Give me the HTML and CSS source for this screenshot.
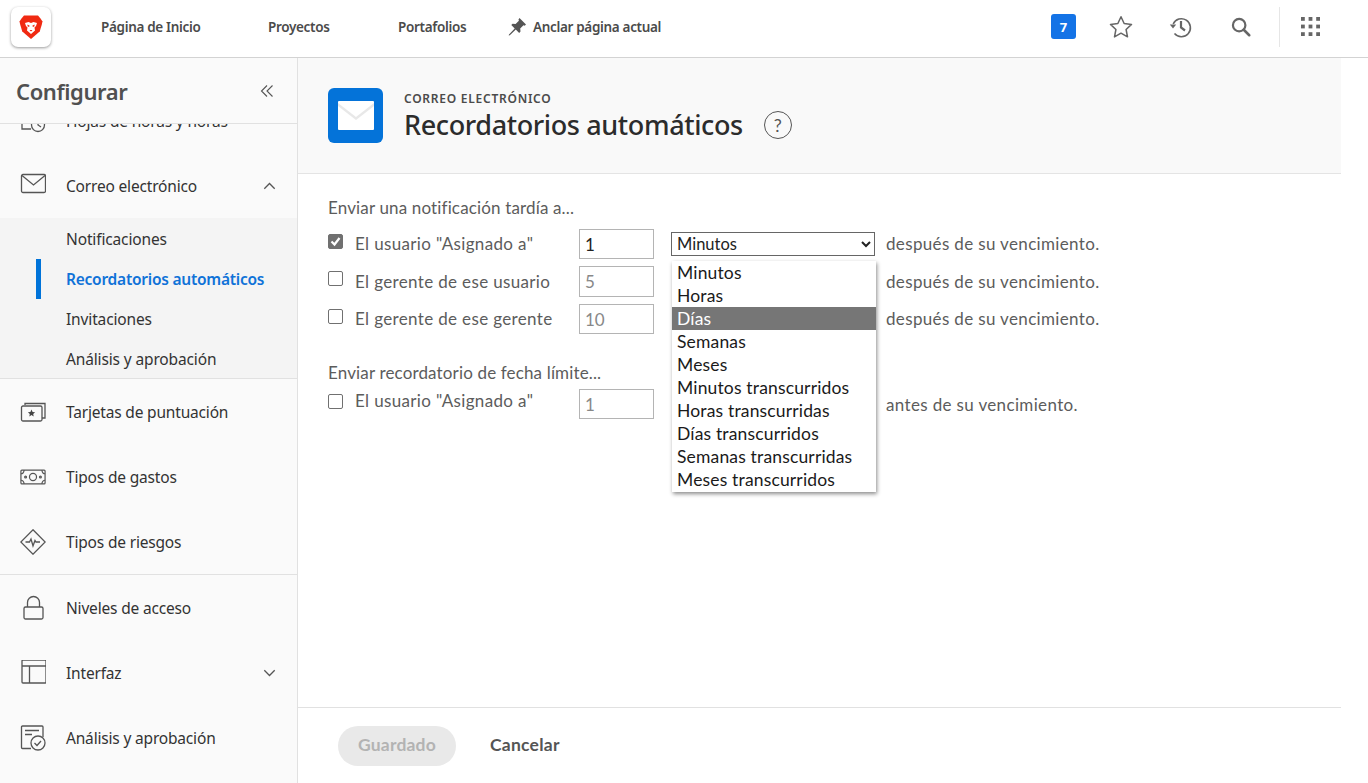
FILE: index.html
```html
<!DOCTYPE html>
<html lang="es">
<head>
<meta charset="utf-8">
<title>Recordatorios automáticos</title>
<link rel="stylesheet" href="styles.css">
</head>
<body>
<header class="topbar">
  <div class="logo-box">
    <svg class="logo" viewBox="0 0 24 26"><path fill="#f02a12" d="M5 1.500h14l2.500 3 2 3-.8 3.500-2 6.500L12 25 3.300 17.500l-2-6.500L.5 7.500l2-3z"/><path fill="#fff" d="M6 9l3.500-1 2.500 1 2.500-1L18 9l-1 3-1.500 1.500.5 3L12 20l-4-3.500.5-3L7 12z"/><path fill="#f02a12" d="M8.500 10.500l2.200 1.200-.7 1.300-1.500-.8zM15.500 10.500l-2.200 1.200.7 1.300 1.500-.8zM10.500 16h3L12 17.500z"/></svg>
  </div>
  <nav class="topnav">
    <a class="topnav-link link-home">Página de Inicio</a>
    <a class="topnav-link link-projects">Proyectos</a>
    <a class="topnav-link link-port">Portafolios</a>
    <a class="topnav-link link-pin">
      <svg class="pin" viewBox="0 0 20 20"><path fill="#555" d="M12.500 1l6.500 6.500-1.300 1.200-1.200-.4-3.300 3.300.3 3-1.300 1.300-3.400-3.400-6 5.700-1.100.3.300-1.100 5.700-6-3.400-3.400 1.300-1.300 3 .3 3.300-3.300-.4-1.200z"/></svg>
      Anclar página actual
    </a>
  </nav>
  <div class="top-tools">
    <span class="badge">7</span>
    <svg class="tool tool-star" viewBox="0 0 24 24"><path fill="none" stroke="#666" stroke-width="1.400" stroke-linejoin="round" d="M12 2.500l2.900 6.300 6.800.8-5 4.700 1.300 6.800-6-3.400-6 3.400 1.300-6.800-5-4.700 6.800-.8z"/></svg>
    <svg class="tool tool-hist" viewBox="0 0 24 24"><path fill="none" stroke="#666" stroke-width="1.600" d="M4.200 9A9 9 0 1 1 5.500 18.500"/><path fill="#666" d="M.8 9.500h6.400L4 13.600z"/><path fill="none" stroke="#666" stroke-width="2.200" d="M12 6v6.500l4 3"/></svg>
    <svg class="tool tool-search" viewBox="0 0 24 24"><circle cx="10" cy="10" r="6.800" fill="none" stroke="#666" stroke-width="2.400"/><path stroke="#666" stroke-width="2.800" stroke-linecap="round" d="M15 15l6 6"/></svg>
    <span class="top-divider"></span>
    <svg class="tool tool-grid" viewBox="0 0 20 20"><g fill="#666"><rect x="0" y="0" width="4" height="4"/><rect x="8" y="0" width="4" height="4"/><rect x="16" y="0" width="4" height="4"/><rect x="0" y="8" width="4" height="4"/><rect x="8" y="8" width="4" height="4"/><rect x="16" y="8" width="4" height="4"/><rect x="0" y="16" width="4" height="4"/><rect x="8" y="16" width="4" height="4"/><rect x="16" y="16" width="4" height="4"/></g></svg>
  </div>
</header>

<div class="body-row">
  <aside class="sidebar">
    <div class="side-head">
      <h2 class="side-title">Configurar</h2>
      <svg class="collapse" viewBox="0 0 14 14"><path fill="none" stroke="#555" stroke-width="1.100" d="M7 1.500L1.500 7 7 12.500M12.500 1.500L7 7l5.500 5.500"/></svg>
    </div>
    <div class="side-scroll">
      <div class="side-list">
        <a class="side-row">
          <svg class="side-icon" viewBox="0 0 26 26"><path class="ln" d="M2 3h17v5M2 3v18h9"/><circle class="ln" cx="18" cy="17" r="6.500"/><path class="ln" d="M18 13v4l3 2"/></svg>
          <span>Hojas de horas y horas</span>
        </a>
        <a class="side-row">
          <svg class="side-icon" viewBox="0 0 26 26"><rect class="ln" x="1.500" y="1.500" width="24" height="18" rx="1.500"/><path class="ln" d="M2 2.500L13.500 12 25 2.500"/></svg>
          <span>Correo electrónico</span>
          <svg class="chev" viewBox="0 0 12 8"><path class="ln" d="M.8 6.800L6 1.500l5.200 5.300"/></svg>
        </a>
        <div class="sub-list">
          <a class="sub-row">Notificaciones</a>
          <a class="sub-row sub-active">Recordatorios automáticos</a>
          <a class="sub-row">Invitaciones</a>
          <a class="sub-row">Análisis y aprobación</a>
        </div>
        <a class="side-row">
          <svg class="side-icon" viewBox="0 0 26 26"><path class="ln" d="M5 6V4.500h20v14.500h-3"/><rect class="ln" x="1.500" y="7" width="20.500" height="15" rx="1.500"/><path fill="#444" d="M11.500 10.500l1.100 2.400 2.500.3-1.900 1.700.5 2.500-2.200-1.300-2.200 1.300.5-2.500-1.900-1.700 2.500-.3z"/></svg>
          <span>Tarjetas de puntuación</span>
        </a>
        <a class="side-row">
          <svg class="side-icon" viewBox="0 0 28 26"><rect class="ln" x="1" y="5.500" width="26" height="15" rx="1"/><circle class="ln" cx="14" cy="13" r="3.800"/><circle class="ln" cx="6" cy="13" r="1"/><circle class="ln" cx="22" cy="13" r="1"/><path class="ln" d="M1 9.500c2 0 3-1 3.500-4M27 9.500c-2 0-3-1-3.500-4M1 16.500c2 0 3 1 3.500 4M27 16.500c-2 0-3 1-3.500 4"/></svg>
          <span>Tipos de gastos</span>
        </a>
        <a class="side-row row-end">
          <svg class="side-icon" viewBox="0 0 26 26"><path class="ln" d="M13 .8L25.200 13 13 25.200.8 13z"/><path class="ln" d="M5.500 13h4l1.500-3 2 7 2-5.500 1 1.500h4"/></svg>
          <span>Tipos de riesgos</span>
        </a>
        <a class="side-row">
          <svg class="side-icon" viewBox="0 0 26 26"><rect class="ln" x="4" y="12" width="19" height="12" rx="1.500"/><path class="ln" d="M7.500 12V7.500a6 6 0 0 1 12 0V12"/></svg>
          <span>Niveles de acceso</span>
        </a>
        <a class="side-row">
          <svg class="side-icon" viewBox="0 0 26 26"><rect class="ln" x="2" y="0" width="24" height="23" rx="1"/><path class="ln" d="M2 6h24M9.500 6v17"/></svg>
          <span>Interfaz</span>
          <svg class="chev" viewBox="0 0 12 8"><path class="ln" d="M.8 1.200L6 6.500l5.200-5.300"/></svg>
        </a>
        <a class="side-row">
          <svg class="side-icon" viewBox="0 0 26 26"><path class="ln" d="M11 23.500H2.500a1 1 0 0 1-1-1V2a1 1 0 0 1 1-1h19.500a1 1 0 0 1 1 1v10"/><path class="ln" d="M5 5.500h14M5 9.500h7"/><circle class="ln" cx="18" cy="18" r="7"/><path class="ln" d="M14.500 18l2.500 2.500 4-4.500"/></svg>
          <span>Análisis y aprobación</span>
        </a>
      </div>
    </div>
  </aside>

  <main class="main">
    <div class="page-head">
      <div class="mail-tile">
        <svg class="mail-svg" viewBox="0 0 36 29"><rect width="36" height="29" rx="1" fill="#fff"/><path fill="#e8e8e8" d="M0 2l18 14L36 2v3L18 19 0 5z"/></svg>
      </div>
      <div class="head-text">
        <div class="eyebrow">CORREO ELECTRÓNICO</div>
        <div class="title-row">
          <h1 class="page-title">Recordatorios automáticos</h1>
          <span class="help">?</span>
        </div>
      </div>
    </div>

    <div class="form-area">
      <p class="group-label">Enviar una notificación tardía a...</p>
      <div class="form-row row-a">
        <span class="check checked"><svg viewBox="0 0 15 15"><path fill="none" stroke="#fff" stroke-width="2.200" d="M3.500 7.500l3 3 5-6.500"/></svg></span>
        <span class="row-label">El usuario "Asignado a"</span>
        <input class="num num-on" value="1">
        <span class="sel-wrap">
          <select class="sel"><option>Minutos</option></select>
          <div class="popup">
            <div class="opt">Minutos</div>
            <div class="opt">Horas</div>
            <div class="opt opt-hl">Días</div>
            <div class="opt">Semanas</div>
            <div class="opt">Meses</div>
            <div class="opt">Minutos transcurridos</div>
            <div class="opt">Horas transcurridas</div>
            <div class="opt">Días transcurridos</div>
            <div class="opt">Semanas transcurridas</div>
            <div class="opt">Meses transcurridos</div>
          </div>
        </span>
        <span class="after">después de su vencimiento.</span>
      </div>
      <div class="form-row row-b">
        <span class="check"></span>
        <span class="row-label">El gerente de ese usuario</span>
        <input class="num" value="5">
        <span class="sel-gap"></span>
        <span class="after">después de su vencimiento.</span>
      </div>
      <div class="form-row row-c">
        <span class="check"></span>
        <span class="row-label">El gerente de ese gerente</span>
        <input class="num" value="10">
        <span class="sel-gap"></span>
        <span class="after">después de su vencimiento.</span>
      </div>
      <p class="group-label group-two">Enviar recordatorio de fecha límite...</p>
      <div class="form-row row-d">
        <span class="check"></span>
        <span class="row-label">El usuario "Asignado a"</span>
        <input class="num" value="1">
        <span class="sel-gap"></span>
        <span class="after">antes de su vencimiento.</span>
      </div>
    </div>

    <div class="page-foot">
      <button class="btn-saved">Guardado</button>
      <button class="btn-cancel">Cancelar</button>
    </div>
  </main>
  <div class="right-strip"></div>
</div>
</body>
</html>
```
FILE: styles.css
```css
* { box-sizing: border-box; }
html, body { margin: 0; height: 783px; overflow: hidden; background: #fff; }
body { font-family: "Lato", "Liberation Sans", sans-serif; color: #4b4b4b; }

.topbar { height: 58px; border-bottom: 1px solid #d3d3d3; display: flex; align-items: center; background: #fff; }
.logo-box { width: 40px; height: 40px; margin: 0 0 4px 11px; border-radius: 7px; background: #fff; box-shadow: 0 1px 3px rgba(0,0,0,.4); display: flex; align-items: center; justify-content: center; }
.logo { width: 24px; height: 26px; }
.topnav { display: flex; align-items: center; margin-left: 50px; height: 100%; padding-bottom: 4px; }
.topnav-link { font-family: "Noto Sans", sans-serif; font-weight: 600; font-size: 13.500px; letter-spacing: -.33px; color: #4b4b4b; white-space: nowrap; display: flex; align-items: center; }
.link-home { width: 167px; }
.link-projects { width: 130px; }
.link-port { width: 111px; }
.pin { width: 20px; height: 20px; margin-right: 6px; margin-left: -2px; }
.top-tools { margin-left: auto; display: flex; align-items: center; height: 100%; padding-right: 48px; }
.badge { width: 25px; height: 25px; border-radius: 3px; background: #1473e6; color: #fff; font-family: "Noto Sans", sans-serif; font-weight: 700; font-size: 13px; display: flex; align-items: center; justify-content: center; margin-right: 32px; margin-bottom: 4px; }
.tool { display: block; margin-bottom: 4px; }
.tool-star { width: 26px; height: 26px; margin-right: 35px; }
.tool-hist { width: 24px; height: 24px; margin-right: 37px; }
.tool-search { width: 22px; height: 22px; margin-right: 27px; }
.top-divider { width: 1px; height: 40px; background: #e6e6e6; margin-right: 21px; margin-bottom: 3px; }
.tool-grid { width: 19px; height: 19px; margin-bottom: 5px; }

.body-row { display: flex; height: 725px; }
.sidebar { width: 298px; flex: none; background: #fafafa; border-right: 1px solid #e1e1e1; display: flex; flex-direction: column; }
.side-head { height: 66px; flex: none; border-bottom: 1px solid #e1e1e1; display: flex; align-items: center; justify-content: space-between; padding: 0 23px 0 16px; }
.side-title { margin: 0; font-family: "Noto Sans", sans-serif; font-weight: 600; font-size: 22px; letter-spacing: -.4px; color: #505050; }
.collapse { width: 14px; height: 14px; }
.side-scroll { flex: 1; overflow: hidden; }
.side-list { margin-top: -36px; }
.side-row { height: 65px; display: flex; align-items: center; padding: 0 21px 0 20px; font-family: "Noto Sans", sans-serif; font-size: 15.500px; letter-spacing: -.18px; color: #333; }
.side-row > span { margin-left: 20px; flex: 1; }
.row-end { height: 66px; border-bottom: 1px solid #e1e1e1; }
.side-icon { width: 26px; height: 26px; flex: none; }
.ln { fill: none; stroke: #555; stroke-width: 1.300; }
.chev { width: 13px; height: 8px; flex: none; }
.sub-list { background: #f4f4f4; border-bottom: 1px solid #e1e1e1; height: 161px; padding-top: 1px; }
.sub-row { height: 40px; display: flex; align-items: center; padding-left: 66px; font-family: "Noto Sans", sans-serif; font-size: 15.500px; letter-spacing: -.14px; color: #333; position: relative; }
.sub-active { color: #0f72d8; font-weight: 600; letter-spacing: -.24px; }
.sub-active::before { content: ""; position: absolute; left: 36px; top: 0; width: 5px; height: 40px; background: #0073d9; }

.main { width: 1043px; flex: none; display: flex; flex-direction: column; }
.right-strip { flex: 1; }
.page-head { height: 116px; flex: none; background: #f9f9f9; border-bottom: 1px solid #e4e4e4; display: flex; padding: 30px 0 0 30px; }
.mail-tile { width: 55px; height: 55px; border-radius: 6px; background: #0473d9; display: flex; align-items: center; justify-content: center; }
.mail-svg { width: 36px; height: 29px; }
.head-text { margin-left: 21px; }
.eyebrow { font-family: "Noto Sans", sans-serif; font-weight: 600; font-size: 12px; letter-spacing: .75px; line-height: 15px; margin-top: 3px; color: #4b4b4b; }
.title-row { display: flex; align-items: center; margin-top: 2px; }
.page-title { margin: 0; font-family: "Noto Sans", sans-serif; font-weight: 500; font-size: 27px; line-height: 34px; letter-spacing: -.38px; color: #2c2c2c; }
.help { width: 28px; height: 28px; margin: 0 0 0 21px; border: 1px solid #555; border-radius: 50%; display: flex; align-items: center; justify-content: center; font-size: 18px; color: #555; }

.form-area { flex: 1; padding: 24px 0 0 30px; }
.group-label { margin: 0; font-size: 17px; letter-spacing: .15px; line-height: 20px; color: #5c5c5c; }
.group-two { margin-top: 29px; }
.form-row { display: flex; align-items: center; height: 30px; font-size: 17px; letter-spacing: .35px; color: #5c5c5c; }
.row-a { margin-top: 11px; }
.row-b { margin-top: 7px; height: 31px; }
.row-c { margin-top: 7px; }
.row-d { margin-top: 6px; }
.check { width: 15px; height: 15px; flex: none; border: 1px solid #707070; border-radius: 2px; background: #fff; margin: -6px 12px 0 0; display: block; }
.check svg { display: block; width: 15px; height: 15px; margin: -1px; }
.checked { background: #707070; }
.row-label { width: 224px; flex: none; margin-top: -2px; }
.row-b .row-label { margin-top: 0; }
.row-d .row-label { margin-top: -8px; }
.num { width: 75px; height: 100%; flex: none; border: 1px solid #b4b4b4; padding: 0 5px; font: 17px "Lato", sans-serif; color: #888; background: #fff; border-radius: 0; outline: none; }
.num-on { color: #222; }
.sel-wrap { width: 204px; flex: none; margin: -1px 0 0 17px; position: relative; display: block; }
.sel { display: block; width: 204px; height: 24px; font: 16.500px "Lato", sans-serif; color: #222; background: #fff; border: 1px solid #666; border-radius: 0; padding: 0 1px; }
.sel-gap { width: 204px; margin-left: 17px; flex: none; }
.after { margin-left: 11px; white-space: nowrap; margin-top: -1px; }
.row-d .after { margin-top: 1px; }
.popup { position: absolute; left: 1px; top: 29px; width: 204px; height: 231px; background: #fff; box-shadow: 1px 2px 4px rgba(0,0,0,.45); z-index: 5; letter-spacing: .16px; }
.opt { height: 23px; line-height: 24px; padding-left: 5px; font-size: 17.500px; color: #1a1a1a; white-space: nowrap; }
.opt-hl { background: #767676; color: #fff; }

.page-foot { height: 76px; flex: none; border-top: 1px solid #e1e1e1; display: flex; align-items: flex-start; padding: 18px 0 0 40px; }
.btn-saved { width: 118px; height: 40px; border: 0; border-radius: 20px; background: #e9e9e9; color: #b3b3b3; font: 700 17.500px "Lato", sans-serif; letter-spacing: .2px; padding: 0 0 3px; }
.btn-cancel { margin-left: 34px; height: 40px; padding: 0 0 3px; border: 0; background: none; color: #555; font: 700 17.500px "Lato", sans-serif; letter-spacing: .25px; }
```
